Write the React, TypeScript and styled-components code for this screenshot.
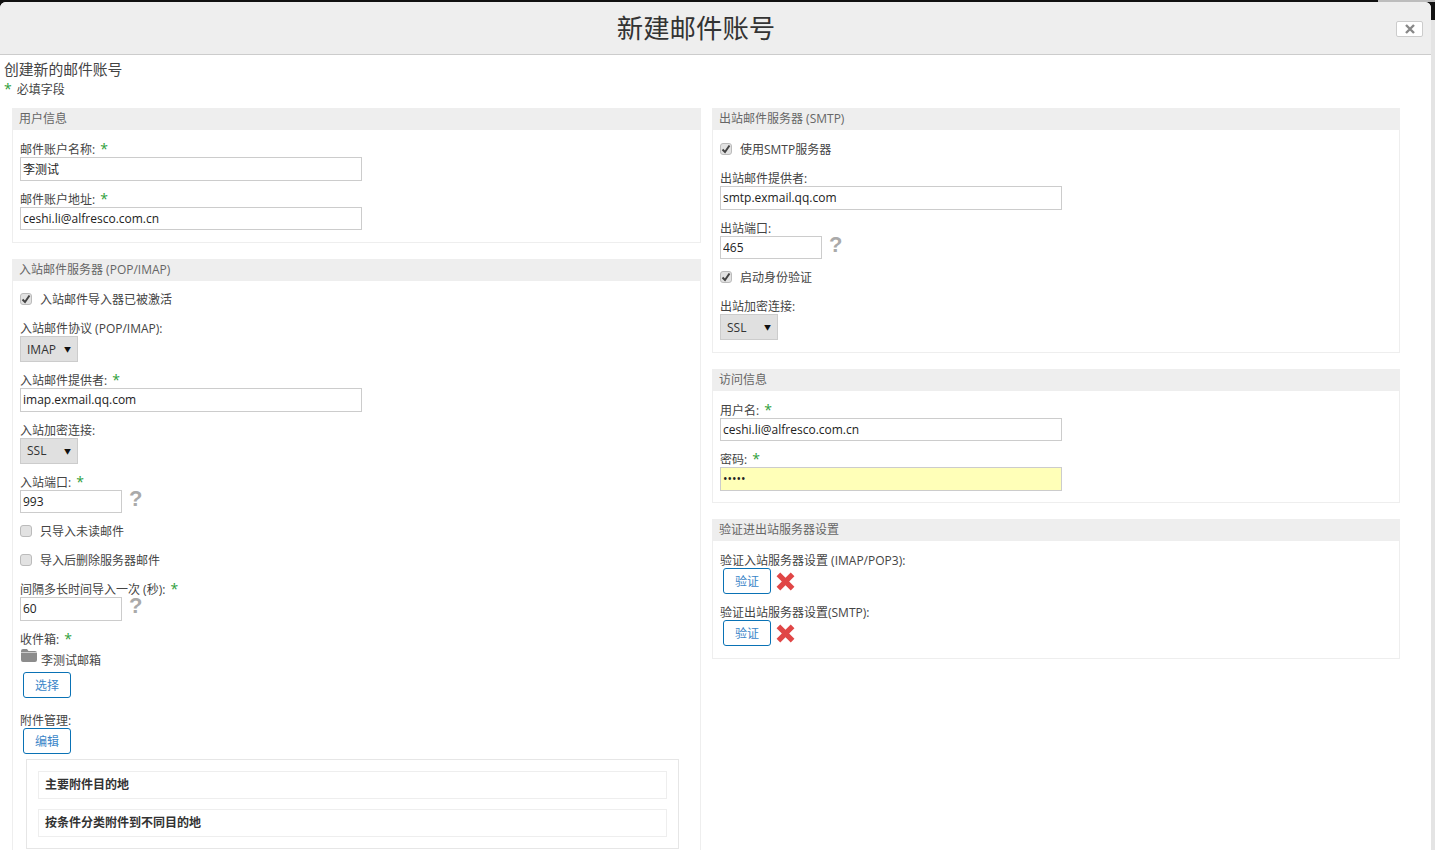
import styled, { createGlobalStyle } from 'styled-components';

const GlobalStyle = createGlobalStyle`
  html, body {
    margin: 0;
    height: 100%;
    overflow: hidden;
  }
  body {
    font-family: 'Open Sans', 'Noto Sans CJK SC', sans-serif;
    font-size: 12px;
    color: #444;
  }
`;

const Page = styled.div`
  height: 850px;
  overflow: hidden;
  box-sizing: border-box;
  padding: 2px 4px 0 0;
  background:
    linear-gradient(90deg, #111 1378px, #bdbdbd 1378px) top / 100% 2px no-repeat,
    linear-gradient(#111 0, #111 20px, #e4e4e4 20px);
`;

const Dialog = styled.div`
  height: 848px;
  overflow: hidden;
  background: #fff;
  border-radius: 6px 6px 0 0;
`;

const DialogHead = styled.header`
  display: flex;
  align-items: center;
  height: 52px;
  background: #eee;
  border-bottom: 1px solid #ccc;
`;

const DialogTitle = styled.h1`
  flex: 0 0 1392px;
  margin: 0;
  text-align: center;
  font-size: 26.4px;
  font-weight: 400;
  line-height: 52px;
  color: #333;
`;

const CloseButton = styled.button`
  display: flex;
  align-items: center;
  justify-content: center;
  width: 27px;
  height: 16px;
  margin: 2px 0 0 4px;
  padding: 0;
  background: #fff;
  border: 1px solid #ccc;
  border-radius: 2px;
  color: #888;
`;

const Intro = styled.div`
  padding: 4px 0 0 4px;
  height: 53px;
  box-sizing: border-box;
`;

const IntroTitle = styled.div`
  font-size: 14.8px;
  line-height: 20px;
  color: #444;
`;

const IntroNote = styled.div`
  padding-top: 3px;
  line-height: 16px;
  color: #444;
`;

const Star = styled.span`
  color: #2f9e3a;
  margin-left: 2px;
  font-size: 14px;
  line-height: 12px;
`;

const NoteStar = styled(Star)`
  margin: 0 2px 0 0;
`;

const Columns = styled.div`
  display: grid;
  grid-template-columns: 689px 688px;
  column-gap: 11px;
  align-items: start;
  padding-left: 12px;
`;

const Column = styled.div`
  display: flex;
  flex-direction: column;
  gap: 16px;
`;

const Panel = styled.section`
  border: 1px solid #eee;
  border-top: 0;
`;

const PanelHead = styled.h2`
  margin: 0 -1px;
  height: 22px;
  padding-left: 7px;
  background: #eee;
  font-size: 12px;
  font-weight: 400;
  line-height: 21px;
  color: #666;
`;

const PanelBody = styled.div<{ $top?: number }>`
  padding: ${(p) => p.$top ?? 12}px 7px 11.5px;
`;

const CheckRow = styled.div`
  display: flex;
  align-items: center;
  gap: 8px;
  height: 14px;
  margin-top: 11px;
  color: #444;

  &:first-child {
    margin-top: 0;
  }
  & + & {
    margin-top: 15px;
  }
`;

const Field = styled.div`
  margin-top: 11px;

  &:first-child {
    margin-top: 0;
  }
  ${CheckRow} + & {
    margin-top: 15px;
  }
`;

const Label = styled.label`
  display: block;
  height: 15px;
  line-height: 15px;
  color: #444;
`;

const TextInput = styled.input<{ $wide?: boolean; $filled?: boolean }>`
  display: block;
  box-sizing: border-box;
  width: ${(p) => (p.$wide ? '342px' : '102px')};
  height: 23.5px;
  margin: 0;
  padding: 0 2px;
  border: 1px solid #ccc;
  border-radius: 0;
  outline: 0;
  background: ${(p) => (p.$filled ? '#ffffb8' : '#fff')};
  font: 12px 'Open Sans', 'Noto Sans CJK SC', sans-serif;
  color: #222;
`;

const InputRow = styled.div`
  display: flex;
  align-items: flex-start;
`;

const Hint = styled.span`
  margin-left: 7px;
  width: 12px;
  height: 18px;
  text-align: center;
  font-family: 'Liberation Sans', sans-serif;
  font-size: 22px;
  font-weight: 700;
  line-height: 18px;
  color: #aaa;
`;

const CheckBox = styled.span`
  display: flex;
  align-items: center;
  justify-content: center;
  box-sizing: border-box;
  width: 12px;
  height: 12px;
  background: #e2e2e2;
  border: 1px solid #bbb;
  border-radius: 3px;
  color: #444;
`;

const SelectBox = styled.div`
  display: flex;
  align-items: center;
  justify-content: space-between;
  box-sizing: border-box;
  width: 58px;
  height: 26px;
  padding: 0 6px;
  background: #e0e0e0;
  border: 1px solid #ccc;
  color: #333;
`;

const SelectArrow = styled.span`
  font-size: 7px;
  color: #111;
`;

const FolderRow = styled.div`
  display: flex;
  align-items: flex-end;
  gap: 4px;
  height: 20px;
  padding-left: 1px;
  line-height: 12px;
  color: #444;

  svg {
    align-self: flex-start;
    margin-top: 2px;
  }
`;

const ActionRow = styled.div`
  display: flex;
  align-items: center;
  gap: 4px;
  padding-left: 3px;
`;

const PickerRow = styled(ActionRow)`
  margin-top: 5px;
`;

const ActionButton = styled.button`
  width: 48px;
  height: 26px;
  padding: 0;
  background: #fff;
  border: 1px solid #0a72b5;
  border-radius: 3px;
  font: 12px 'Open Sans', 'Noto Sans CJK SC', sans-serif;
  color: #3a86c8;
`;

const MailboxField = styled(Field)``;

const AttachField = styled(Field)`
  ${MailboxField} + & {
    margin-top: 15px;
  }
`;

const AttachBox = styled.div`
  display: flex;
  flex-direction: column;
  gap: 10px;
  margin: 5px 0 0 6px;
  width: 653px;
  box-sizing: border-box;
  padding: 11px;
  border: 1px solid #e6e6e6;
`;

const AttachRow = styled.div`
  height: 28px;
  box-sizing: border-box;
  padding-left: 6px;
  border: 1px solid #eee;
  font-weight: 700;
  line-height: 26px;
  color: #333;
`;

const Check = () => (
  <svg width="10" height="10" viewBox="0 0 10 10">
    <path d="M1.5 5.5 L4 8 L8.5 1.5" fill="none" stroke="currentColor" strokeWidth="2" />
  </svg>
);

const Cross = () => (
  <svg width="21" height="21" viewBox="0 0 20 20">
    <path
      d="M5 1.5 L10 6.5 L15 1.5 L18.5 5 L13.5 10 L18.5 15 L15 18.5 L10 13.5 L5 18.5 L1.5 15 L6.5 10 L1.5 5 Z"
      fill="#e04646"
    />
  </svg>
);

const CloseIcon = () => (
  <svg width="10" height="10" viewBox="0 0 10 10">
    <path d="M1 1 L9 9 M9 1 L1 9" stroke="currentColor" strokeWidth="2.4" />
  </svg>
);

const Folder = () => (
  <svg width="16" height="13" viewBox="0 0 16 13">
    <path d="M0 2 Q0 0 2 0 H6 L7.5 2 H14 Q16 2 16 4 V11 Q16 13 14 13 H2 Q0 13 0 11 Z" fill="#8c8c8c" />
    <path d="M0 3.5 H16" stroke="#ddd" strokeWidth="0.8" />
  </svg>
);

const TextField = ({ label, value, required, filled, type }: {
  label: string;
  value: string;
  required?: boolean;
  filled?: boolean;
  type?: string;
}) => (
  <Field>
    <Label>
      {label}: {required && <Star>*</Star>}
    </Label>
    <TextInput $wide $filled={filled} type={type ?? 'text'} value={value} readOnly />
  </Field>
);

const ShortField = ({ label, value, required }: { label: string; value: string; required?: boolean }) => (
  <Field>
    <Label>
      {label}: {required && <Star>*</Star>}
    </Label>
    <InputRow>
      <TextInput value={value} readOnly />
      <Hint>?</Hint>
    </InputRow>
  </Field>
);

const SelectField = ({ label, value }: { label: string; value: string }) => (
  <Field>
    <Label>{label}:</Label>
    <SelectBox>
      {value}
      <SelectArrow>▼</SelectArrow>
    </SelectBox>
  </Field>
);

const Toggle = ({ label, on }: { label: string; on?: boolean }) => (
  <CheckRow>
    <CheckBox>{on && <Check />}</CheckBox>
    {label}
  </CheckRow>
);

const VerifyField = ({ label }: { label: string }) => (
  <Field>
    <Label>{label}:</Label>
    <ActionRow>
      <ActionButton>验证</ActionButton>
      <Cross />
    </ActionRow>
  </Field>
);

export default function App() {
  return (
    <>
      <GlobalStyle />
      <Page>
        <Dialog>
          <DialogHead>
            <DialogTitle>新建邮件账号</DialogTitle>
            <CloseButton aria-label="关闭">
              <CloseIcon />
            </CloseButton>
          </DialogHead>
          <Intro>
            <IntroTitle>创建新的邮件账号</IntroTitle>
            <IntroNote>
              <NoteStar>*</NoteStar> 必填字段
            </IntroNote>
          </Intro>
          <Columns>
            <Column>
              <Panel>
                <PanelHead>用户信息</PanelHead>
                <PanelBody>
                  <TextField label="邮件账户名称" value="李测试" required />
                  <TextField label="邮件账户地址" value="ceshi.li@alfresco.com.cn" required />
                </PanelBody>
              </Panel>
              <Panel>
                <PanelHead>入站邮件服务器 (POP/IMAP)</PanelHead>
                <PanelBody $top={11.5}>
                  <Toggle label="入站邮件导入器已被激活" on />
                  <SelectField label="入站邮件协议 (POP/IMAP)" value="IMAP" />
                  <TextField label="入站邮件提供者" value="imap.exmail.qq.com" required />
                  <SelectField label="入站加密连接" value="SSL" />
                  <ShortField label="入站端口" value="993" required />
                  <Toggle label="只导入未读邮件" />
                  <Toggle label="导入后删除服务器邮件" />
                  <ShortField label="间隔多长时间导入一次 (秒)" value="60" required />
                  <MailboxField>
                    <Label>
                      收件箱: <Star>*</Star>
                    </Label>
                    <FolderRow>
                      <Folder />
                      李测试邮箱
                    </FolderRow>
                    <PickerRow>
                      <ActionButton>选择</ActionButton>
                    </PickerRow>
                  </MailboxField>
                  <AttachField>
                    <Label>附件管理:</Label>
                    <ActionRow>
                      <ActionButton>编辑</ActionButton>
                    </ActionRow>
                    <AttachBox>
                      <AttachRow>主要附件目的地</AttachRow>
                      <AttachRow>按条件分类附件到不同目的地</AttachRow>
                    </AttachBox>
                  </AttachField>
                </PanelBody>
              </Panel>
            </Column>
            <Column>
              <Panel>
                <PanelHead>出站邮件服务器 (SMTP)</PanelHead>
                <PanelBody>
                  <Toggle label="使用SMTP服务器" on />
                  <TextField label="出站邮件提供者" value="smtp.exmail.qq.com" />
                  <ShortField label="出站端口" value="465" />
                  <Toggle label="启动身份验证" on />
                  <SelectField label="出站加密连接" value="SSL" />
                </PanelBody>
              </Panel>
              <Panel>
                <PanelHead>访问信息</PanelHead>
                <PanelBody>
                  <TextField label="用户名" value="ceshi.li@alfresco.com.cn" required />
                  <TextField label="密码" value="12345" type="password" filled required />
                </PanelBody>
              </Panel>
              <Panel>
                <PanelHead>验证进出站服务器设置</PanelHead>
                <PanelBody>
                  <VerifyField label="验证入站服务器设置 (IMAP/POP3)" />
                  <VerifyField label="验证出站服务器设置(SMTP)" />
                </PanelBody>
              </Panel>
            </Column>
          </Columns>
        </Dialog>
      </Page>
    </>
  );
}
